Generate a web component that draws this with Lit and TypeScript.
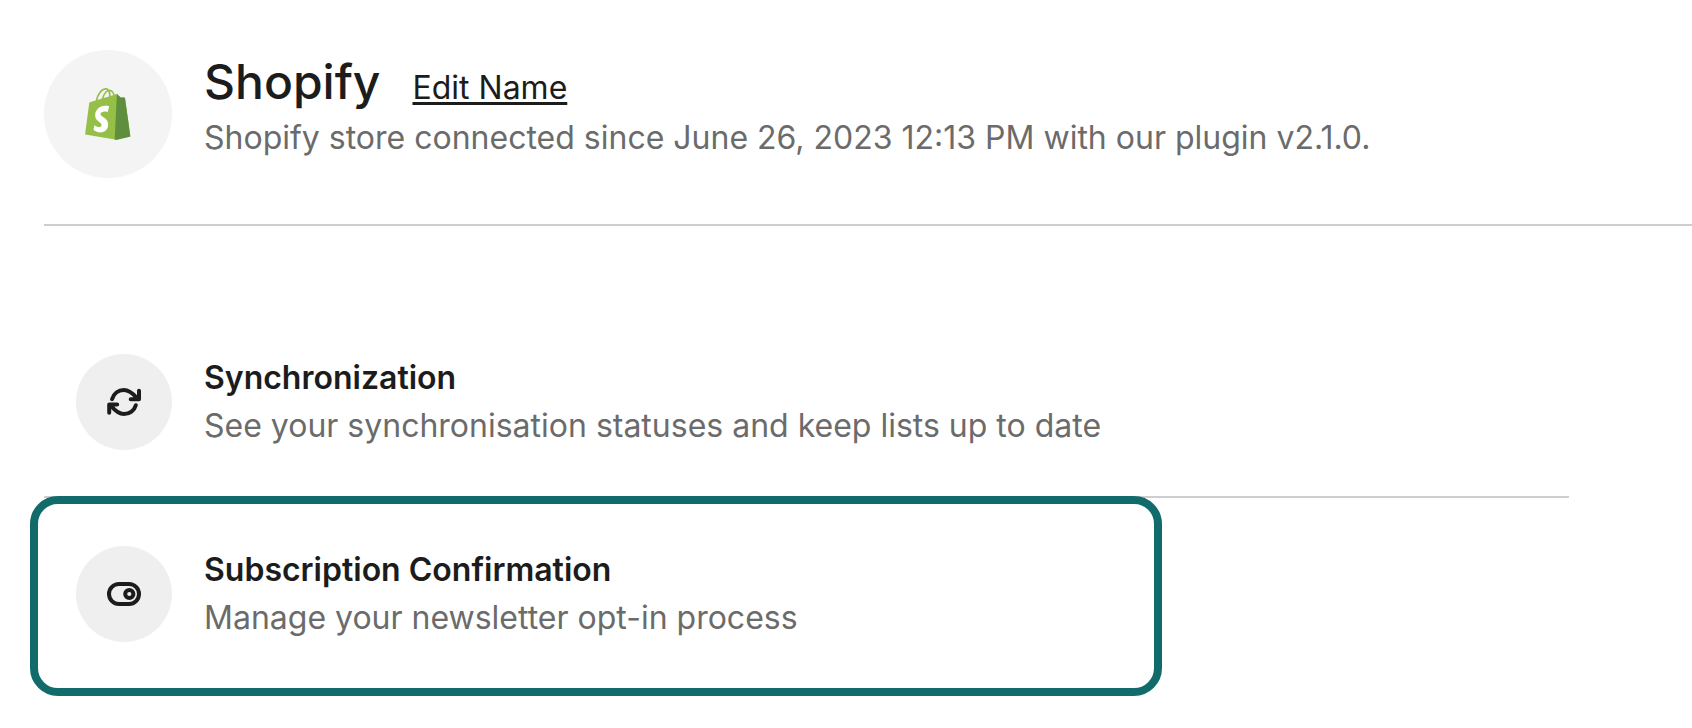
import { LitElement, html, css, svg } from "lit";
import { customElement } from "lit/decorators.js";

const shopifyLogo = svg`<svg class="logo" viewBox="0 4 109.5 125" aria-hidden="true">
  <path fill="#95BF47" d="M95.6,28.2c-0.1-0.6-0.6-1-1.1-1c-0.5,0-9.3-0.2-9.3-0.2s-7.4-7.2-8.1-7.9c-0.7-0.7-2.2-0.5-2.7-0.3c0,0-1.4,0.4-3.7,1.1c-0.4-1.3-1-2.8-1.8-4.4c-2.6-5-6.5-7.7-11.1-7.7c-0.3,0-0.6,0-1,0.1c-0.1-0.2-0.3-0.3-0.4-0.5c-2-2.2-4.6-3.2-7.7-3.1c-6,0.2-12,4.5-16.8,12.2c-3.4,5.4-6,12.2-6.7,17.5c-6.9,2.1-11.7,3.6-11.8,3.7c-3.5,1.1-3.6,1.2-4,4.5c-0.3,2.5-9.5,73.3-9.5,73.3l75.6,13.1l32.8-8.1C109.2,120.4,95.7,28.8,95.6,28.2z M67.2,21.2c-1.7,0.5-3.7,1.1-5.9,1.8c0-3-0.4-7.3-1.8-10.9C64.1,13,66.3,18.1,67.2,21.2z M57.2,24.3c-4,1.2-8.4,2.6-12.8,3.9c1.2-4.7,3.6-9.4,6.4-12.5c1.1-1.1,2.6-2.4,4.3-3.2C56.9,16.1,57.3,21.1,57.2,24.3z M49.1,8.4c1.4,0,2.6,0.3,3.6,0.9c-1.6,0.8-3.2,2.1-4.7,3.6c-3.8,4.1-6.7,10.5-7.9,16.6c-3.6,1.1-7.2,2.2-10.5,3.2C31.8,23.1,39.9,8.6,49.1,8.4z"/>
  <path fill="#5E8E3E" d="M94.5,27.2c-0.5,0-9.3-0.2-9.3-0.2s-7.4-7.2-8.1-7.9c-0.3-0.3-0.6-0.4-1-0.5L70.8,128.3l5.3,0.2l32.8-8.1c0,0-13.2-91.6-13.3-92.2C95.5,27.6,95,27.2,94.5,27.2z"/>
  <path fill="#fff" d="M57.5,48.1l-3.8,14.3c0,0-4.3-2-9.4-1.6c-7.5,0.5-7.5,5.2-7.5,6.4c0.4,6.4,17.3,7.8,18.3,22.9c0.7,11.9-6.3,20-16.4,20.6c-12.2,0.8-18.9-6.4-18.9-6.4l2.6-11c0,0,6.7,5.1,12.1,4.7c3.5-0.2,4.8-3.1,4.7-5.1c-0.5-8.4-14.3-7.9-15.2-21.7c-0.7-11.6,6.9-23.4,23.7-24.4C54.2,46.3,57.5,48.1,57.5,48.1z"/>
</svg>`;

const syncIcon = svg`<svg class="icon" viewBox="0 0 48 48" aria-hidden="true">
  <path d="M12 21.2C13.6 15.8 18.2 12 23.8 12C28.6 12 32 14.4 37 20M39 12.7V21.2H30.7"/>
  <path d="M35.8 27.2C34.4 32.4 29.6 36 24 36C19.2 36 15.8 33.6 11.2 28M9.2 34.8V26.6H17.2"/>
</svg>`;

const toggleIcon = svg`<svg class="icon" viewBox="0 0 48 48" aria-hidden="true">
  <rect x="9" y="14" width="30" height="20" rx="10"/>
  <circle cx="29.3" cy="24" r="4.1"/>
</svg>`;

const settings = [
  {
    id: "synchronization",
    icon: syncIcon,
    title: "Synchronization",
    text: "See your synchronisation statuses and keep lists up to date",
    highlighted: false,
  },
  {
    id: "subscription-confirmation",
    icon: toggleIcon,
    title: "Subscription Confirmation",
    text: "Manage your newsletter opt-in process",
    highlighted: true,
  },
];

@customElement("app-root")
export class AppRoot extends LitElement {
  static styles = css`
    :host {
      display: block;
      box-sizing: border-box;
      min-height: 100vh;
      padding: 50px 0 32px 44px;
      background: #fff;
      color: #1c1c1c;
      font-family: Inter, "Liberation Sans", sans-serif;
      font-size: 32px;
      line-height: 48px;
    }
    h1, h2, p, ul {
      margin: 0;
      padding: 0;
    }
    .header {
      display: flex;
      align-items: flex-start;
      gap: 32px;
      padding-bottom: 46px;
      border-bottom: 2px solid #cecece;
    }
    .avatar, .badge {
      display: flex;
      flex: none;
      align-items: center;
      justify-content: center;
      border-radius: 50%;
    }
    .avatar {
      width: 128px;
      height: 128px;
      background: #f4f4f4;
    }
    .badge {
      width: 96px;
      height: 96px;
      background: #efefef;
    }
    .logo {
      width: 46px;
      height: 52px;
    }
    .icon {
      width: 48px;
      height: 48px;
      fill: none;
      stroke: currentColor;
      stroke-width: 4;
      stroke-linecap: round;
      stroke-linejoin: round;
    }
    .heading {
      display: flex;
      align-items: baseline;
      gap: 32px;
    }
    .name {
      font-size: 48px;
      font-weight: 500;
      line-height: 64px;
    }
    .edit {
      color: inherit;
      text-decoration: underline;
      text-decoration-thickness: 3px;
      text-underline-offset: 3px;
    }
    .muted {
      color: #6b6b6b;
    }
    .list {
      margin: 80px 123px 0 0;
      list-style: none;
    }
    .item {
      position: relative;
    }
    .item + .item {
      border-top: 2px solid #cecece;
    }
    .link {
      display: flex;
      align-items: center;
      gap: 32px;
      padding: 48px 0 46px 32px;
      color: inherit;
      text-decoration: none;
    }
    .title {
      font-size: 32px;
      font-weight: 600;
    }
    .highlight {
      position: absolute;
      box-sizing: border-box;
      top: -2px;
      bottom: -8px;
      left: -14px;
      width: 1132px;
      max-width: calc(100% + 28px);
      border: 8px solid #126b6b;
      border-radius: 28px;
      pointer-events: none;
    }
  `;

  render() {
    return html`
      <header class="header">
        <div class="avatar">${shopifyLogo}</div>
        <div>
          <div class="heading">
            <h1 class="name">Shopify</h1>
            <a class="edit" href="#edit-name">Edit Name</a>
          </div>
          <p class="muted">Shopify store connected since June 26, 2023 12:13 PM with our plugin v2.1.0.</p>
        </div>
      </header>
      <ul class="list">
        ${settings.map(
          (s) => html`<li class="item">
            <a class="link" href="#${s.id}">
              <span class="badge">${s.icon}</span>
              <div>
                <h2 class="title">${s.title}</h2>
                <p class="muted">${s.text}</p>
              </div>
            </a>
            ${s.highlighted ? html`<div class="highlight"></div>` : null}
          </li>`
        )}
      </ul>
    `;
  }
}
